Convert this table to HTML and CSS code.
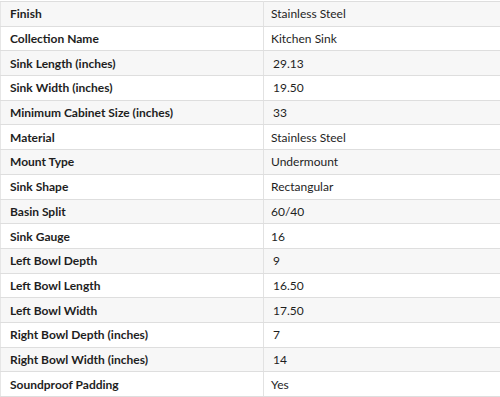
FILE: index.html
```html
<!DOCTYPE html>
<html lang="en">
<head>
    <meta charset="UTF-8">
    <meta name="viewport" content="width=device-width, initial-scale=1.0">
    <title>Sink Specifications</title>
    <link rel="stylesheet" href="styles.css">
</head>
<body>
    <table class="specs">
        <tbody>
            <tr><th>Finish</th><td>Stainless Steel</td></tr>
            <tr><th>Collection Name</th><td>Kitchen Sink</td></tr>
            <tr><th>Sink Length (inches)</th><td class="num">29.13</td></tr>
            <tr><th>Sink Width (inches)</th><td class="num">19.50</td></tr>
            <tr><th>Minimum Cabinet Size (inches)</th><td class="num">33</td></tr>
            <tr><th>Material</th><td>Stainless Steel</td></tr>
            <tr><th>Mount Type</th><td>Undermount</td></tr>
            <tr><th>Sink Shape</th><td>Rectangular</td></tr>
            <tr><th>Basin Split</th><td>60/40</td></tr>
            <tr><th>Sink Gauge</th><td>16</td></tr>
            <tr><th>Left Bowl Depth</th><td class="num">9</td></tr>
            <tr><th>Left Bowl Length</th><td class="num">16.50</td></tr>
            <tr><th>Left Bowl Width</th><td class="num">17.50</td></tr>
            <tr><th>Right Bowl Depth (inches)</th><td class="num">7</td></tr>
            <tr><th>Right Bowl Width (inches)</th><td class="num">14</td></tr>
            <tr><th>Soundproof Padding</th><td>Yes</td></tr>
        </tbody>
    </table>
</body>
</html>
```

FILE: styles.css
```css
body {
    margin: 0;
    padding-top: 1px;
    background: #fff;
    font-family: Lato, "Liberation Sans", sans-serif;
    color: #1e1e1e;
}

.specs {
    width: 100%;
    border-collapse: collapse;
    font-size: 12px;
}

.specs tr {
    height: 24.7px;
}

.specs tr:nth-child(odd) {
    background-color: #f7f7f7;
}

.specs th,
.specs td {
    padding: 0 0 0 9px;
    border-top: 1px solid #dedede;
    border-bottom: 1px solid #dedede;
    text-align: left;
    vertical-align: middle;
}

.specs th {
    width: 253px;
    font-weight: bold;
    border-left: 1px solid #e6e6e6;
    border-right: 1px solid #e2e2e2;
}

.specs td {
    padding-left: 7px;
}

.specs td.num {
    padding-left: 9px;
}
```
